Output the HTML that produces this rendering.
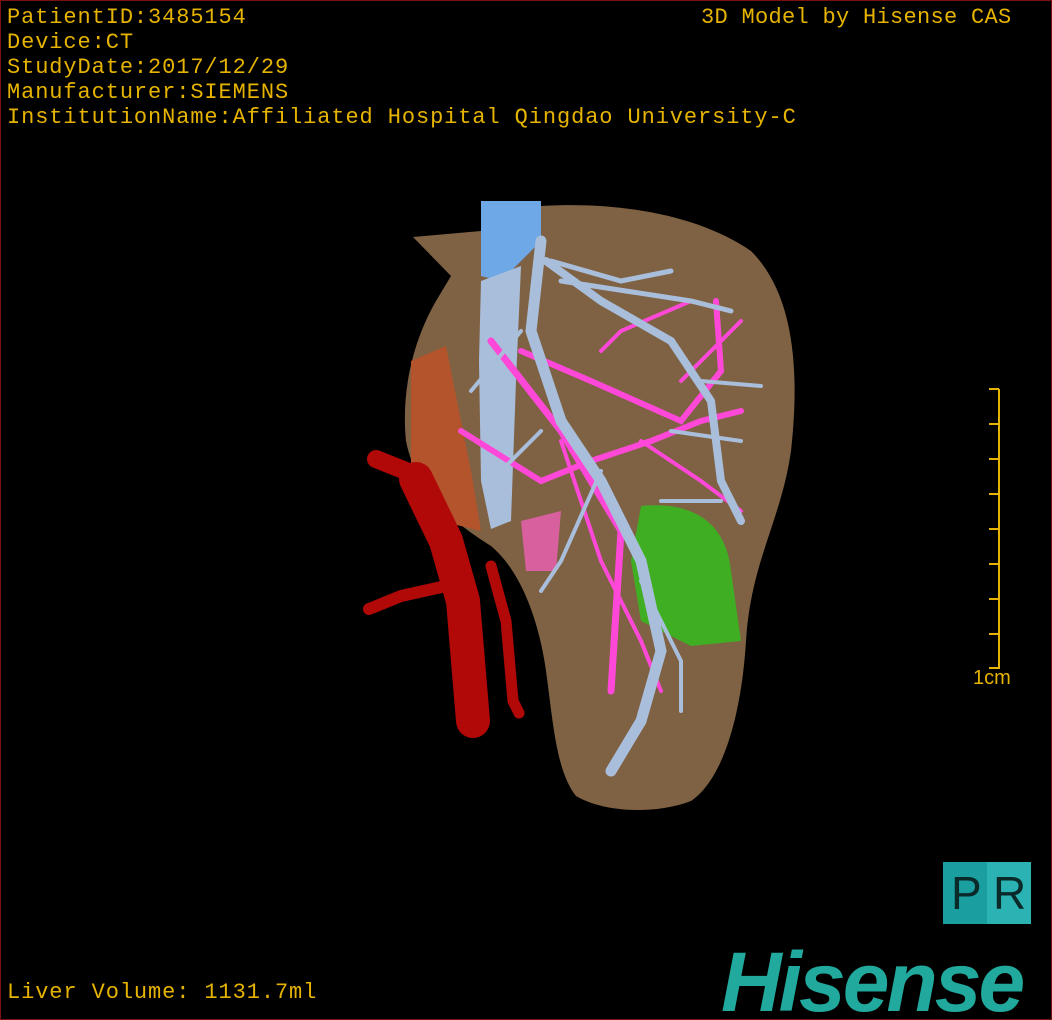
<!DOCTYPE html>
<html><head><meta charset="utf-8"><style>
html,body{margin:0;padding:0;background:#000;}
#w{position:relative;width:1050px;height:1018px;border:1px solid #7a1010;overflow:hidden;background:#000;font-family:"Liberation Mono","DejaVu Sans Mono",monospace;}
.t{position:absolute;color:#e6b400;font-size:22px;line-height:25px;white-space:pre;letter-spacing:0.9px;}
</style></head><body><div id="w">
<svg width="1050" height="1018" style="position:absolute;left:0;top:0">
<path d="M412,236 L480,230 L540,205 C620,200 700,215 750,250 C790,290 800,360 790,450 C780,520 750,560 745,640 C740,720 720,780 690,800 C650,815 600,810 575,795 C555,770 552,720 545,670 C538,620 520,570 490,545 C450,520 415,490 405,440 C400,390 412,340 435,300 L450,275 Z" fill="#7f6244"/>
<path d="M410,360 L445,345 L470,470 L480,530 L440,520 L410,480 Z" fill="#b4542c"/>
<g fill="none" stroke="#b10808" stroke-linecap="round" stroke-linejoin="round">
<path d="M375,458 L410,472" stroke-width="18"/>
<path d="M415,478 L445,540 L462,600 L472,720" stroke-width="34"/>
<path d="M445,585 L400,595 L368,608" stroke-width="12"/>
<path d="M490,565 L505,620 L512,700 L518,712" stroke-width="11"/>
</g>
<path d="M520,520 L560,510 L555,570 L525,570 Z" fill="#d9609e"/>
<path d="M640,505 C690,500 725,520 730,570 L740,640 L690,645 L640,620 L630,560 Z" fill="#3fae22"/>
<path d="M480,200 L540,200 L540,240 L500,280 L480,275 Z" fill="#6fa8e6"/>
<path d="M480,280 L520,265 L515,380 L510,520 L490,528 L480,480 L478,360 Z" fill="#a9bedb"/>
<g fill="none" stroke="#ff48d8" stroke-linecap="round">
<path d="M490,340 L560,430 L620,530 L610,690" stroke-width="7"/>
<path d="M520,350 L590,380 L680,420 L720,370 L715,300" stroke-width="6"/>
<path d="M460,430 L540,480 L590,460 L650,440 L700,420 L740,410" stroke-width="6"/>
<path d="M600,350 L620,330 L690,300 M680,380 L740,320 M640,440 L700,480 L740,510" stroke-width="4"/>
<path d="M560,440 L600,560 L640,640 L660,690" stroke-width="4"/>
</g>
<g fill="none" stroke="#a9bedb" stroke-linecap="round">
<path d="M540,240 L530,330 L560,420 L600,480 L640,560 L660,650 L640,720 L610,770" stroke-width="11"/>
<path d="M545,260 L600,300 L670,340 L710,400 L720,480 L740,520" stroke-width="8"/>
<path d="M550,260 L620,280 L670,270 M560,280 L690,300 L730,310" stroke-width="5"/>
<path d="M520,330 L470,390 M540,430 L500,470 M600,470 L560,560 L540,590 M640,580 L680,660 L680,710 M670,430 L740,440 M700,380 L760,385 M660,500 L720,500" stroke-width="4"/>
</g>
</svg>
<div class="t" style="left:6px;top:4px">PatientID:3485154
Device:CT
StudyDate:2017/12/29
Manufacturer:SIEMENS
InstitutionName:Affiliated Hospital Qingdao University-C</div>
<div class="t" style="left:700px;top:4px;letter-spacing:0.3px">3D Model by Hisense CAS</div>
<div class="t" style="left:6px;top:979px">Liver Volume: 1131.7ml</div>
<div style="position:absolute;left:997px;top:388px;width:2px;height:280px;background:#e6b400"></div>
<div style="position:absolute;left:988px;top:387px;width:10px;height:2px;background:#e6b400;box-shadow:0 35px #e6b400,0 70px #e6b400,0 105px #e6b400,0 140px #e6b400,0 175px #e6b400,0 210px #e6b400,0 245px #e6b400,0 279px #e6b400"></div>
<div style="position:absolute;left:972px;top:666px;color:#e6b400;font:20px 'Liberation Sans',sans-serif">1cm</div>
<div style="position:absolute;left:942px;top:861px;width:88px;height:62px;background:linear-gradient(90deg,#1a9ea0 50%,#2bb3b3 50%);"></div>
<div style="position:absolute;left:950px;top:861px;color:#0a2a2a;font:46px 'Liberation Sans',sans-serif;line-height:62px;">P</div>
<div style="position:absolute;left:992px;top:861px;color:#0a2a2a;font:46px 'Liberation Sans',sans-serif;line-height:62px;">R</div>
<div style="position:absolute;left:720px;top:936px;color:#20a99c;font:italic bold 84px 'Liberation Sans',sans-serif;line-height:90px;letter-spacing:-3px">Hisense</div>
</div></body></html>
